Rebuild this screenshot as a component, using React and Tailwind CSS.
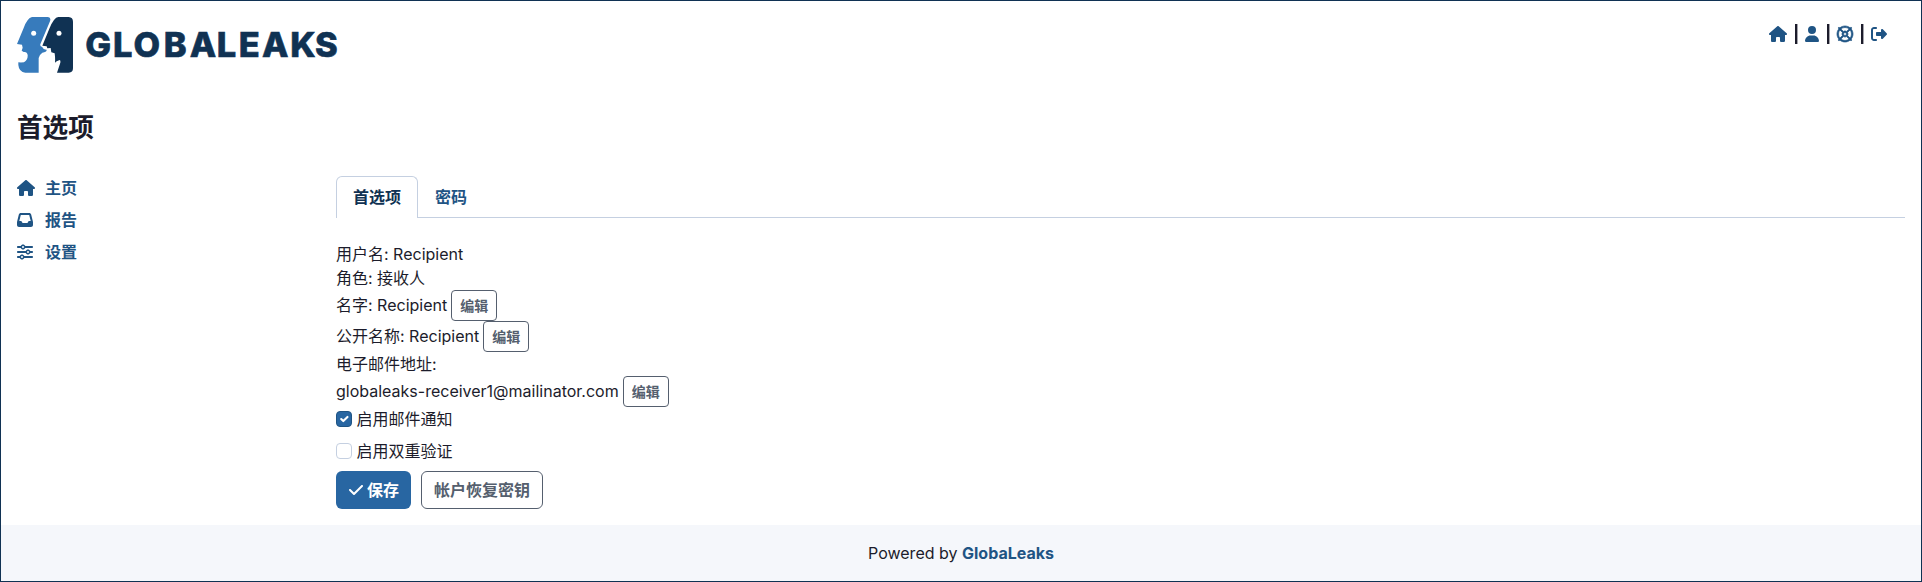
import React from "react";
import {
  FaHouse,
  FaUser,
  FaRegLifeRing,
  FaRightFromBracket,
  FaInbox,
  FaSliders,
  FaCheck,
} from "react-icons/fa6";

function Logo() {
  return (
    <svg className="block h-[58px] w-[326px]" viewBox="0 0 326 58" role="img" aria-label="GlobaLeaks">
      <g transform="translate(-7 -7) scale(0.33333)">
        <path
          fill="#377bbc"
          d="M66 21H114Q124 22 120 34L91 103Q89 109 97 111Q100 119 110 119Q111 127 97 128Q88 134 86 144V188H46Q27 186 25 165V157Q32 158 42 157Q54 150 53 135Q51 124 41 126L35 122L38 113L36 104L21 102L41 54Q52 24 66 21Z"
        />
        <path
          fill="#103253"
          d="M145 21H176Q189 22 189 35V175Q189 188 176 188H141L151 158Q152 151 149 150L140 154L135 158Q136 145 134 130L124 127L122 114L112 115L110 109L97 107L118 56Q132 22 145 21Z"
        />
        <circle cx="71" cy="70" r="7.5" fill="#fff" />
        <circle cx="147" cy="70" r="7.5" fill="#fff" />
      </g>
      <text
        y="40"
        x="68.2 96.1 116.6 146.8 172.7 199.8 221.8 245 273.3 298"
        fill="#103253"
        stroke="#103253"
        strokeWidth="0.6"
        className="font-[Inter] text-[34.4px] font-extrabold"
      >
        GLOBALEAKS
      </text>
    </svg>
  );
}

function Separator() {
  return <span className="-mr-px h-5 w-[3px] border-r border-[#a4a4ab] bg-[#1c1c2b]" />;
}

function NavItem({ icon, label }) {
  return (
    <a className="flex h-8 items-center font-semibold text-[#1f5484]">
      <span className="w-7">{icon}</span>
      {label}
    </a>
  );
}

function EditButton() {
  return (
    <button className="ml-1 h-[31px] w-[46px] rounded-[4px] border border-[#555f6e] text-sm font-semibold text-[#555f6e]">
      编辑
    </button>
  );
}

export default function App() {
  return (
    <div className="flex h-[582px] flex-col border border-[#103253] bg-white font-['Inter','Noto_Sans_CJK_SC',sans-serif] text-base text-[#1c1c2b]">
      <header className="flex h-[90px] items-start justify-between pt-4 pr-[34px] pl-4">
        <Logo />
        <div className="mt-px flex h-8 items-center gap-2 text-base text-[#1f5484]">
          <FaHouse className="w-[18px]" />
          <Separator />
          <FaUser className="w-[14px]" />
          <Separator />
          <FaRegLifeRing className="overflow-visible stroke-[#1f5484] stroke-[22px]" />
          <Separator />
          <FaRightFromBracket />
        </div>
      </header>
      <h1 className="flex h-[74px] items-center px-4 text-[25.6px] font-semibold">首选项</h1>
      <div className="flex px-4 pt-[11px]">
        <nav className="-mt-1 w-[319px] shrink-0">
          <NavItem icon={<FaHouse className="w-[18px]" />} label="主页" />
          <NavItem icon={<FaInbox />} label="报告" />
          <NavItem icon={<FaSliders />} label="设置" />
        </nav>
        <main className="min-w-0 flex-1">
          <div className="flex h-[42px] border-b border-[#c5d0e1]">
            <div className="h-[42px] rounded-t-md border border-b-0 border-[#c5d0e1] bg-white px-4 pt-2 font-semibold text-[#103253]">
              首选项
            </div>
            <div className="px-[17px] pt-[9px] font-semibold text-[#1f5484]">密码</div>
          </div>
          <div className="pt-6">
            <div className="h-6 leading-6">用户名: Recipient</div>
            <div className="h-6 leading-6">角色: 接收人</div>
            <div className="flex h-[31px] items-center leading-6">
              <span className="-mt-[2px]">名字: Recipient</span>
              <EditButton />
            </div>
            <div className="flex h-[31px] items-center leading-6">
              <span className="-mt-[2px]">公开名称: Recipient</span>
              <EditButton />
            </div>
            <div className="h-6 leading-6">电子邮件地址:</div>
            <div className="flex h-[31px] items-center leading-6">
              <span className="-mt-[2px]">globaleaks-receiver1@mailinator.com</span>
              <EditButton />
            </div>
            <label className="flex h-6 items-center">
              <span className="mr-[4.5px] flex size-4 items-center justify-center rounded-[4px] border border-[#1f5484] bg-[#2866a2] text-white">
                <svg viewBox="0 0 20 20" className="size-[14px]" fill="none" stroke="currentColor" strokeWidth="3" strokeLinecap="round" strokeLinejoin="round">
                  <path d="m6 10 3 3 6-6" />
                </svg>
              </span>
              启用邮件通知
            </label>
            <label className="mt-2 flex h-6 items-center">
              <span className="mr-[4.5px] size-4 rounded-[4px] border border-[#c5d0e1]" />
              启用双重验证
            </label>
            <div className="mt-2 flex gap-[10px] font-semibold">
              <button className="flex h-[38px] w-[75px] items-center justify-center gap-1 rounded-md bg-[#2866a2] pl-px text-white">
                <FaCheck className="w-[14px]" />
                保存
              </button>
              <button className="h-[38px] w-[122px] rounded-md border border-[#555f6e] text-[#555f6e]">
                帐户恢复密钥
              </button>
            </div>
          </div>
        </main>
      </div>
      <footer className="mt-auto flex h-14 items-center justify-center bg-[#f5f7fb]">
        <span>
          Powered by <a className="font-bold text-[#1f5484]">GlobaLeaks</a>
        </span>
      </footer>
    </div>
  );
}
